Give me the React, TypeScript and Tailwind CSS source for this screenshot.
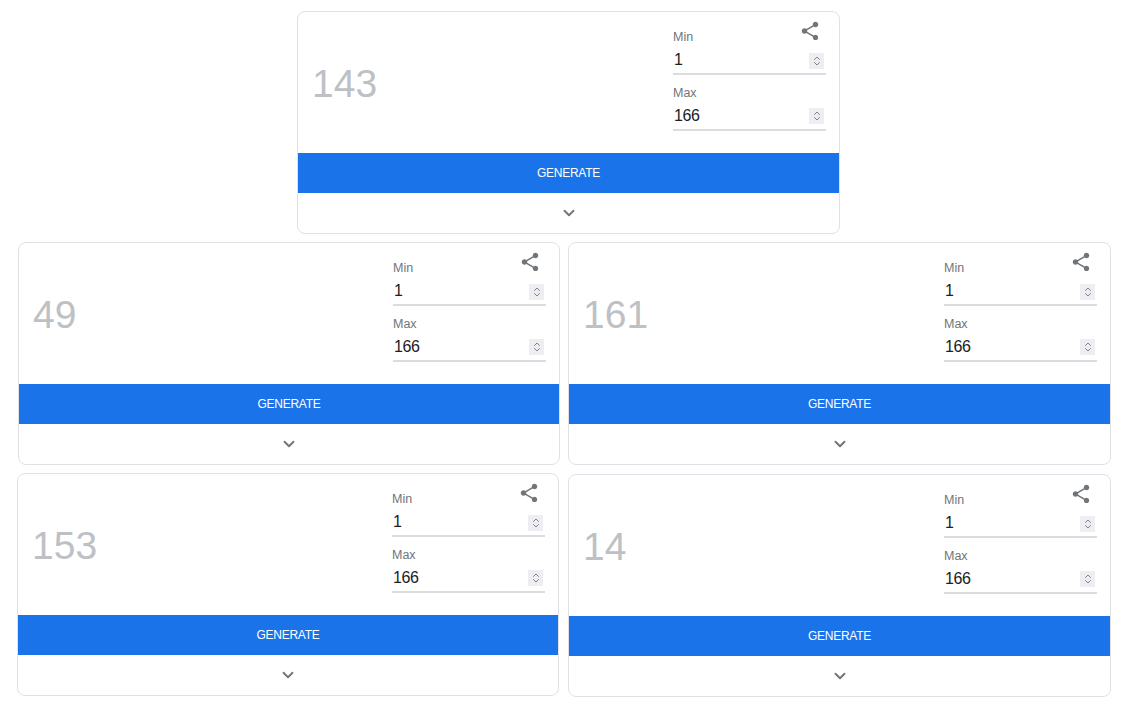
import { ChevronDown, ChevronsUpDown } from "lucide-react";

function ShareIcon() {
  return (
    <svg viewBox="0 0 24 24" className="h-[22px] w-[22px] fill-[#70757a]" aria-hidden>
      <path d="M18 16.08c-.76 0-1.44.3-1.96.77L8.91 12.7c.05-.23.09-.46.09-.7s-.04-.47-.09-.7l7.05-4.11c.54.5 1.25.81 2.04.81 1.66 0 3-1.34 3-3s-1.34-3-3-3-3 1.34-3 3c0 .24.04.47.09.7L8.04 9.81C7.5 9.31 6.79 9 6 9c-1.66 0-3 1.34-3 3s1.34 3 3 3c.79 0 1.5-.31 2.04-.81l7.12 4.16c-.05.21-.08.43-.08.65 0 1.61 1.31 2.92 2.92 2.92 1.61 0 2.92-1.31 2.92-2.92s-1.31-2.92-2.92-2.92z" />
    </svg>
  );
}

function RangeField({ label, value }: { label: string; value: number }) {
  return (
    <div className="flex h-[55.5px] flex-col">
      <label className="h-[21px] text-[12.5px] leading-[20px] text-[#70757a]">{label}</label>
      <div className="box-content flex h-[25px] items-center justify-between border-b-2 border-[#dadce0] pl-[1px] pr-[2px]">
        <span className="pb-[1px] text-[16px] leading-[22px] tracking-[-0.4px] text-[#202124]">{value}</span>
        <span className="flex h-[16px] w-[15px] items-center justify-center bg-[#eeeef2]">
          <ChevronsUpDown className="h-[12px] w-[12px] text-[#70757a]" strokeWidth={1.75} />
        </span>
      </div>
    </div>
  );
}

function RandomCard({ result, narrow = false }: { result: number; narrow?: boolean }) {
  return (
    <div
      className={`relative h-[223px] shrink-0 overflow-hidden rounded-lg border border-[#dfe1e5] bg-white ${
        narrow ? "w-[542px]" : "w-[543px]"
      }`}
    >
      <div className="flex h-[141px] items-center justify-between pl-[14px] pr-[13px]">
        <div className="pt-[2px] text-[39px] leading-[41px] text-[#bdc1c6]">{result}</div>
        <div className="flex w-[153px] flex-col">
          <RangeField label="Min" value={1} />
          <RangeField label="Max" value={166} />
        </div>
      </div>
      <button
        type="button"
        className="flex h-[40px] w-full items-center justify-center bg-[#1a73e8] text-[12px] tracking-[-0.25px] text-white"
      >
        GENERATE
      </button>
      <div className="flex h-[40px] items-center justify-center">
        <ChevronDown className="h-[18px] w-[18px] text-[#70757a]" strokeWidth={2.5} />
      </div>
      <div className="absolute right-[18px] top-[8px]">
        <ShareIcon />
      </div>
    </div>
  );
}

export default function App() {
  return (
    <div className="min-h-[706px] bg-white pt-[11px] font-['Liberation_Sans',Arial,sans-serif]">
      <div className="flex flex-col gap-2">
        <div className="flex pl-[297px]">
          <RandomCard result={143} />
        </div>
        <div className="flex gap-2 pl-[18px]">
          <RandomCard result={49} narrow />
          <RandomCard result={161} />
        </div>
        <div className="flex gap-[9px] pl-[17px]">
          <RandomCard result={153} narrow />
          <div className="mt-px">
            <RandomCard result={14} />
          </div>
        </div>
      </div>
    </div>
  );
}
